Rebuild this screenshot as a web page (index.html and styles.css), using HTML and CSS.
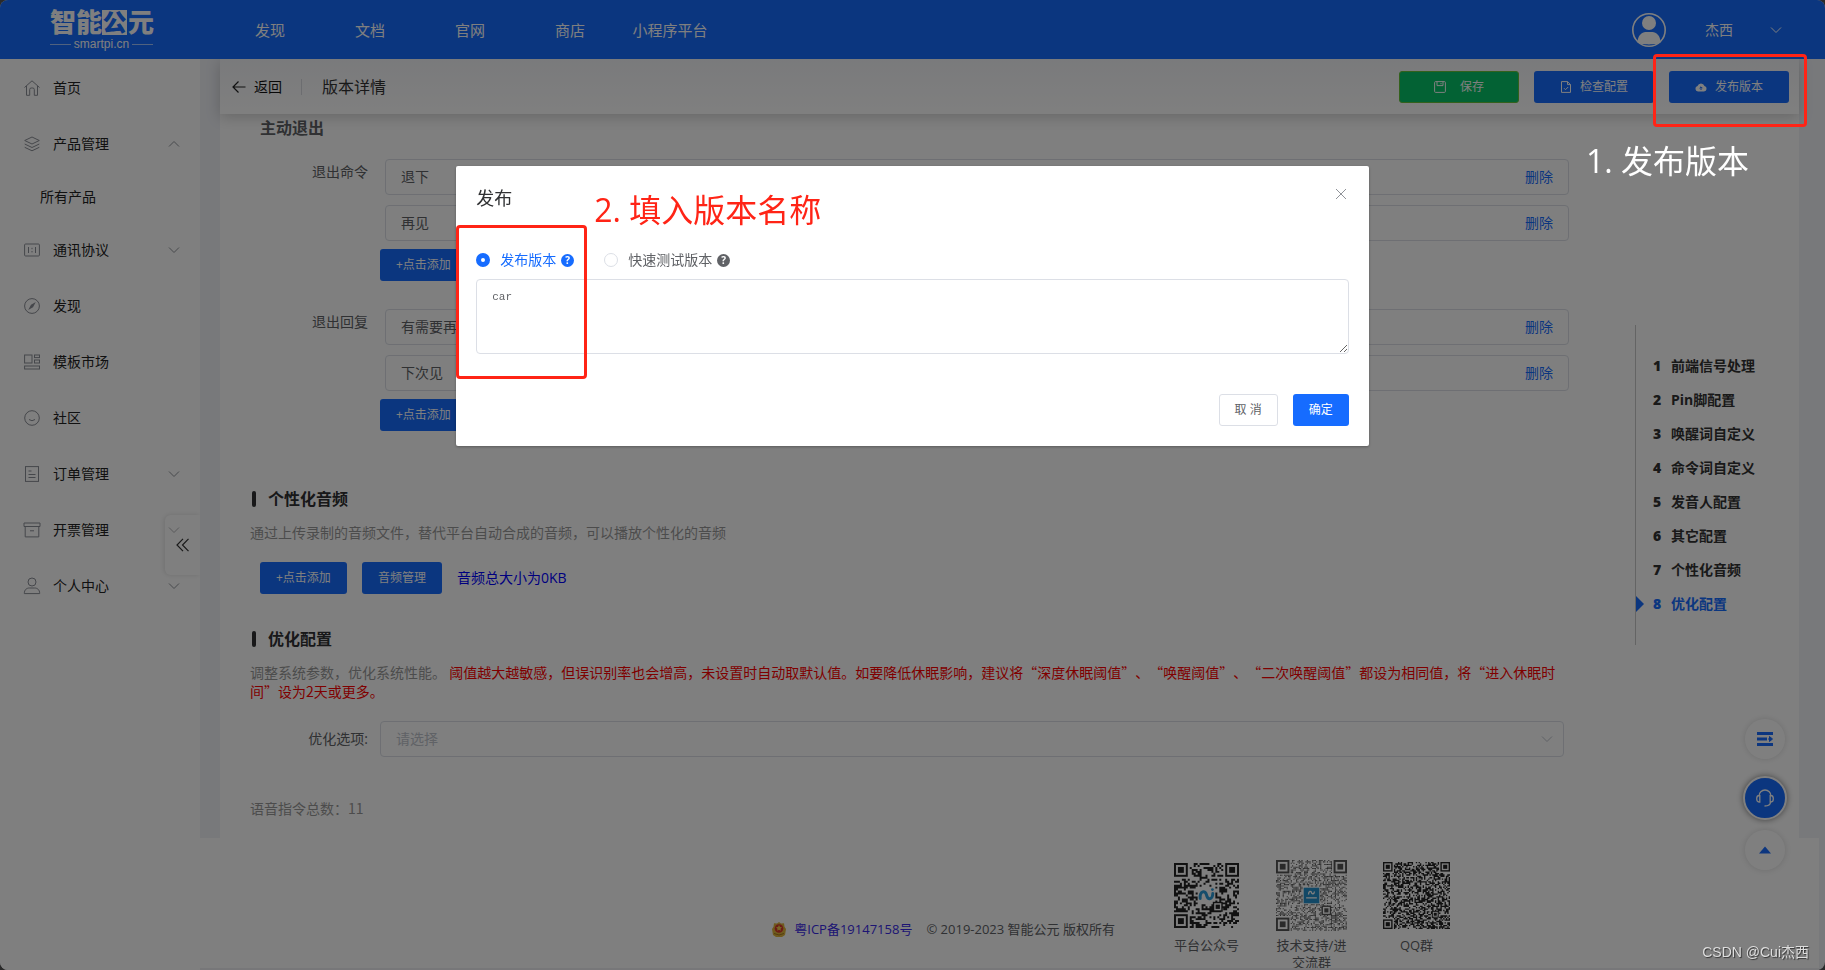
FILE: index.html
```html
<!DOCTYPE html>
<html lang="zh-CN">
<head>
<meta charset="utf-8">
<title>智能公元 - 版本详情</title>
<link rel="stylesheet" href="styles.css">
</head>
<body>
<div class="app">
  <header class="header">
    <a class="logo" href="#">
      <span class="logo-name"><span>智</span><span>能</span><span class="logo-box">公</span><span>元</span></span>
      <span class="logo-sub">smartpi.cn</span>
    </a>
    <nav class="topnav">
      <a href="#">发现</a><a href="#">文档</a><a href="#">官网</a><a href="#">商店</a><a href="#">小程序平台</a>
    </nav>
    <div class="user">
      <svg class="avatar" viewBox="0 0 36 36"><circle cx="18" cy="18" r="16.2" fill="none" stroke="#fff" stroke-width="1.6"/><circle cx="18" cy="11" r="7" fill="#fff"/><path d="M6.5 30.5c0-7 4.500-10.500 8-10.500h7c3.500 0 8 3.500 8 10.500-3 2.500-20 2.500-23 0z" fill="#fff"/></svg>
      <span>杰西</span>
      <svg class="chev" viewBox="0 0 12 12"><path d="M1 3.500l5 5 5-5"/></svg>
    </div>
  </header>

  <div class="body">
    <aside class="sidebar">
      <a class="item" href="#"><svg class="ico" viewBox="0 0 16 16"><path d="M.5 7.500L8 .8l7.500 6.700M2.500 6v9.300h3.200V9.500q0-1.500 1.500-1.500h1.600q1.500 0 1.500 1.500v5.800h3.200V6"/></svg><span>首页</span></a>
      <a class="item" href="#"><svg class="ico" viewBox="0 0 16 16"><path d="M8 1l7.300 3.500L8 8 .7 4.500zM.7 8L8 11.500 15.300 8M.7 11.300L8 14.800l7.300-3.500"/></svg><span>产品管理</span><svg class="chev" viewBox="0 0 12 12"><path d="M1 8.500l5-5 5 5"/></svg></a>
      <a class="item sub" href="#"><span>所有产品</span></a>
      <a class="item" href="#"><svg class="ico" viewBox="0 0 16 16"><rect x=".6" y="2" width="14.800" height="12" rx="1"/><path d="M4.500 5v6M11.500 5v6M8 5.800v1.400M8 9v1.400"/></svg><span>通讯协议</span><svg class="chev" viewBox="0 0 12 12"><path d="M1 3.500l5 5 5-5"/></svg></a>
      <a class="item" href="#"><svg class="ico" viewBox="0 0 16 16"><circle cx="8" cy="8" r="7.400"/><path d="M11.800 4L9 9.200 4.200 12 7 6.800z" fill="#8b8e96" stroke="none"/></svg><span>发现</span></a>
      <a class="item" href="#"><svg class="ico" viewBox="0 0 16 16"><rect x=".6" y="1" width="7.400" height="8"/><rect x="10.500" y="1" width="5" height="2.600"/><rect x="10.500" y="6" width="5" height="3"/><rect x=".6" y="12" width="14.900" height="3"/></svg><span>模板市场</span></a>
      <a class="item" href="#"><svg class="ico" viewBox="0 0 16 16"><circle cx="8" cy="8" r="7.300"/><path d="M5 9.500q3 2.500 6 0"/></svg><span>社区</span></a>
      <a class="item" href="#"><svg class="ico" viewBox="0 0 16 16"><rect x="1.500" y=".6" width="13" height="14.800"/><path d="M4.500 5h3M4.500 8.500h7M4.500 11.500h7"/></svg><span>订单管理</span><svg class="chev" viewBox="0 0 12 12"><path d="M1 3.500l5 5 5-5"/></svg></a>
      <a class="item" href="#"><svg class="ico" viewBox="0 0 16 16"><path d="M0 1h16v3.500H0zM1.200 4.500v10.400h13.600V4.500M6 8.800h4"/></svg><span>开票管理</span><svg class="chev" viewBox="0 0 12 12"><path d="M1 3.500l5 5 5-5"/></svg></a>
      <a class="item" href="#"><svg class="ico" viewBox="0 0 16 16"><circle cx="8" cy="4" r="4"/><path d="M.3 15.600c0-4 2.500-5.600 5-5.600h5.400c2.500 0 5 1.600 5 5.600z"/></svg><span>个人中心</span><svg class="chev" viewBox="0 0 12 12"><path d="M1 3.500l5 5 5-5"/></svg></a>
      <button class="collapse" aria-label="收起"><svg viewBox="0 0 14 14"><path d="M7 .8L1 7l6 6.200M12.500.8L6.500 7l6 6.200"/></svg></button>
    </aside>

    <div class="page">
      <main class="main">
        <div class="titlebar">
          <button class="back"><svg viewBox="0 0 14 14"><path d="M13.500 7H1M6.500 1.500L1 7l5.500 5.500"/></svg>返回</button>
          <i class="sep"></i>
          <h1>版本详情</h1>
          <div class="actions">
            <button class="btn wide save"><svg viewBox="0 0 12 12"><rect x=".6" y=".6" width="10.800" height="10.800" rx="1"/><path d="M3 .6v4h6v-4M7 2v1.200"/></svg>保存</button>
            <button class="btn wide"><svg viewBox="0 0 12 12"><path d="M1.500.6h6l3 3v7.800h-9zM7.500.6v3h3M4 7.200l1.500 1.500 2.700-2.700"/></svg>检查配置</button>
            <button class="btn wide"><svg viewBox="0 0 12 12"><path d="M3 10.500a2.800 2.800 0 0 1-.5-5.500 3.700 3.700 0 0 1 7 0 2.800 2.800 0 0 1-.5 5.500z" fill="#fff" stroke="none"/><path d="M6 9V6M4.600 7.200L6 5.800l1.400 1.400" stroke="#1a6cff"/></svg>发布版本</button>
          </div>
        </div>

        <div class="content">
          <div class="form">
            <h3 class="subhead">主动退出</h3>
            <div class="row">
              <span class="label">退出命令</span>
              <div class="fields">
                <div class="field"><input aria-label="退出命令一" value="退下"><button>删除</button></div>
                <div class="field"><input aria-label="退出命令二" value="再见"><button>删除</button></div>
                <button class="btn add">+点击添加</button>
              </div>
            </div>
            <div class="row second">
              <span class="label">退出回复</span>
              <div class="fields">
                <div class="field"><input aria-label="退出回复一" value="有需要再叫我"><button>删除</button></div>
                <div class="field"><input aria-label="退出回复二" value="下次见"><button>删除</button></div>
                <button class="btn add">+点击添加</button>
              </div>
            </div>

            <h2 class="section audio">个性化音频</h2>
            <p class="desc">通过上传录制的音频文件，替代平台自动合成的音频，可以播放个性化的音频</p>
            <div class="tools">
              <button class="btn add">+点击添加</button>
              <button class="btn">音频管理</button>
              <span class="total">音频总大小为0KB</span>
            </div>

            <h2 class="section tuning">优化配置</h2>
            <p class="desc">调整系统参数，优化系统性能。 <span class="warn">阈值越大越敏感，但误识别率也会增高，未设置时自动取默认值。如要降低休眠影响，建议将“深度休眠阈值”、“唤醒阈值”、“二次唤醒阈值”都设为相同值，将“进入休眠时间”设为2天或更多。</span></p>
            <div class="row option">
              <label class="label" for="opt">优化选项:</label>
              <div class="select">
                <select id="opt"><option>请选择</option></select>
                <svg class="chev" viewBox="0 0 12 12"><path d="M1 3.500l5 5 5-5"/></svg>
              </div>
            </div>
            <p class="desc count">语音指令总数：11</p>
          </div>

          <ol class="anchors">
            <li><b>1</b><a href="#">前端信号处理</a></li>
            <li><b>2</b><a href="#">Pin脚配置</a></li>
            <li><b>3</b><a href="#">唤醒词自定义</a></li>
            <li><b>4</b><a href="#">命令词自定义</a></li>
            <li><b>5</b><a href="#">发音人配置</a></li>
            <li><b>6</b><a href="#">其它配置</a></li>
            <li><b>7</b><a href="#">个性化音频</a></li>
            <li class="on"><b>8</b><a href="#">优化配置</a></li>
          </ol>
        </div>
      </main>

      <footer class="footer">
        <div class="legal">
          <svg viewBox="0 0 14 15"><path d="M7 0l2 1.500 3-.2.500 3.500L14 7l-1 6-3 2H4l-3-2-1-6 1.500-2.200.5-3.500 3 .2z" fill="#e0b53c"/><circle cx="7" cy="6.500" r="4.300" fill="#d8382c"/><path d="M7 3l1 2 2 .3-1.500 1.400.4 2L7 7.700l-1.900 1 .4-2L4 5.300 6 5z" fill="#f3cd4b"/><path d="M2 11.500q5 3 10 0" stroke="#a97b1c" fill="none"/></svg>
          <a href="#">粤ICP备19147158号</a>
          <span>© 2019-2023 智能公元 版权所有</span>
        </div>
        <figure class="code"><div><svg class="qr small" data-n="33" data-seed="7" data-kind="wave"></svg></div><figcaption>平台公众号</figcaption></figure>
        <figure class="code"><div><svg class="qr big" data-n="53" data-seed="23" data-kind="badge"></svg></div><figcaption>技术支持/进交流群</figcaption></figure>
        <figure class="code"><div><svg class="qr mid" data-n="49" data-seed="91" data-kind="plain"></svg></div><figcaption>QQ群</figcaption></figure>
      </footer>
    </div>
  </div>
</div>

<div class="floats">
  <button aria-label="目录"><svg viewBox="0 0 16 14"><path d="M0 1.500h16M0 7h10M0 12.500h16" stroke="#1a6cff" stroke-width="2.800" fill="none"/><path d="M11 7h3M12.500 4.500L15.500 7l-3 2.500z" fill="#1a6cff" stroke="#1a6cff"/></svg></button>
  <button class="service" aria-label="客服"><svg viewBox="0 0 18 18"><path d="M3 7a6 6 0 0 1 12 0M3.800 6.500v6.500H3Q.7 13 .7 9.800T3 6.500zM14.200 6.500v6.500h.8q2.300 0 2.300-3.200T15 6.500zM14.500 13q0 4-6 4" fill="none" stroke="#fff" stroke-width="1.300"/></svg></button>
  <button aria-label="回到顶部"><svg viewBox="0 0 16 14"><path d="M8 3.500l6 7H2z" fill="#1a6cff"/></svg></button>
</div>

<div class="mask">
  <section class="dialog" role="dialog" aria-labelledby="dlg">
    <div class="dialog-head"><h2 id="dlg">发布</h2><button class="close" aria-label="关闭"><svg viewBox="0 0 12 12"><path d="M1 1l10 10M11 1L1 11"/></svg></button></div>
    <div class="radios">
      <label class="checked"><input type="radio" name="kind" checked><span>发布版本</span><i class="help">?</i></label>
      <label><input type="radio" name="kind"><span>快速测试版本</span><i class="help">?</i></label>
    </div>
    <textarea aria-label="版本名称">car</textarea>
    <div class="dialog-foot"><button class="btn cancel">取 消</button><button class="btn">确定</button></div>
    <div class="frame frame-form"></div>
    <p class="note note-form">2. 填入版本名称</p>
  </section>
  <div class="frame frame-publish"></div>
  <p class="note note-publish">1. 发布版本</p>
  <p class="watermark">CSDN @Cui杰西</p>
</div>
<script src="qr.js"></script>
</body>
</html>
```
FILE: styles.css
```css
* { box-sizing: border-box; }
html { background: #555; }
body, h1, h2, h3, p, ol, figure { margin: 0; padding: 0; }
body { font: 14px/20px "Open Sans", "Noto Sans CJK SC", sans-serif; color: #333; overflow: hidden; }
a { color: inherit; text-decoration: none; }
button, input, select { font: inherit; color: inherit; }
button { border: 0; background: none; padding: 0; cursor: pointer; }
svg { display: block; flex: none; }

.app { min-height: 100vh; display: flex; flex-direction: column; background: #f0f2f7; border-radius: 8px; overflow: hidden; }
.header { height: 59px; background: #166cff; color: #fff; display: flex; align-items: center; }
.logo { width: 220px; padding-left: 50px; padding-top: 2px; }
.logo-name { display: flex; gap: 1px; height: 27px; }
.logo-name span { width: 25px; height: 25px; font-size: 26px; line-height: 24px; font-weight: 900; }
.logo-name .logo-box { background: #fff; color: #166cff; font-size: 24px; text-align: center; }
.logo-sub { display: flex; align-items: center; gap: 3px; width: 103px; font: 12px/14px "Liberation Sans", sans-serif; }
.logo-sub::before, .logo-sub::after { content: ""; flex: 1; height: 1px; background: rgba(255,255,255,.6); }
.topnav { display: flex; font-size: 15px; }
.topnav a { width: 100px; text-align: center; }
.user { margin-left: auto; padding-right: 43px; display: flex; align-items: center; }
.avatar { width: 36px; height: 36px; margin-right: 38px; }
.user .chev { margin-left: 37px; stroke: #fff; }
.chev { width: 12px; height: 12px; fill: none; stroke: #909399; }

.body { flex: 1; display: flex; }
.sidebar { width: 200px; flex: none; background: #fff; padding-top: 2px; position: relative; color: #222; }
.item { height: 56px; padding: 0 20px 2px 24px; display: flex; align-items: center; gap: 13px; }
.item.sub { height: 50px; padding-left: 40px; }
.item .chev { margin-left: auto; }
.ico { width: 16px; height: 16px; fill: none; stroke: #8b8e96; overflow: visible; }
.collapse { position: absolute; right: 0; top: 456px; width: 35px; height: 60px; border-radius: 6px 0 0 6px; background: rgba(255,255,255,.3); box-shadow: -1px 0 5px rgba(0,0,0,.12); display: flex; align-items: center; justify-content: center; clip-path: inset(-8px 0 -8px -8px); }
.collapse svg { width: 14px; height: 14px; fill: none; stroke: #333; stroke-width: 1.2; }

.page { flex: 1; min-width: 0; display: flex; flex-direction: column; }
.main { flex: 1; margin: 0 26px 0 20px; background: #fff; }
.titlebar { height: 55px; padding: 0 10px 0 12px; display: flex; align-items: center; background: linear-gradient(#f4f5f8, #fff); box-shadow: 0 3px 14px rgba(0,0,0,.2); clip-path: inset(0 -14px -20px -14px); }
.back { display: flex; align-items: center; gap: 8px; color: #111; }
.back svg { width: 14px; height: 14px; fill: none; stroke: #222; stroke-width: 1.200; }
.sep { width: 1px; height: 16px; background: #d8dae0; margin: 0 20px 0 19px; }
h1 { font-size: 16px; font-weight: 400; line-height: 24px; }
.actions { margin-left: auto; display: flex; align-items: center; gap: 15px; }
.btn { height: 32px; padding: 0 16px; background: #166cff; color: #fff; border-radius: 3px; font-size: 12px; line-height: 18px; display: flex; align-items: center; justify-content: center; white-space: nowrap; }
.btn.wide { width: 120px; gap: 8px; }
.btn svg { width: 12px; height: 12px; fill: none; stroke: #fff; }
.btn.save { gap: 14px; background: #07c568; border: 1px solid #67c23a; }

.content { display: flex; align-items: flex-start; padding: 4px 0 20px 30px; }
.form { flex: 1; min-width: 0; }
.subhead { font-size: 16px; line-height: 20px; color: #606266; padding-left: 10px; margin-bottom: 21px; }
.row { display: flex; }
.row.second { margin-top: 28px; }
.label { width: 130px; flex: none; padding-right: 12px; text-align: right; line-height: 26px; color: #606266; }
.fields { flex: 1; }
.field { height: 36px; margin: 0 0 10px 5px; padding: 0 15px; border: 1px solid #dcdfe6; border-radius: 4px; display: flex; align-items: center; color: #606266; }
.field input { flex: 1; min-width: 0; border: 0; padding: 0; background: none; outline: 0; }
.field button { color: #166cff; }
.fields .add { margin-top: -2px; }
.section { font-size: 16px; line-height: 24px; color: #303133; display: flex; align-items: center; gap: 12px; padding-left: 2px; }
.section::before { content: ""; width: 4px; height: 16px; border-radius: 2px; background: #303133; }
.audio { margin-top: 56px; }
.tuning { margin-top: 33px; }
.desc { margin-top: 12px; line-height: 19px; color: #999; font-family: "Noto Sans CJK SC", sans-serif; text-spacing-trim: space-all; }
.warn { color: #f00; }
.tools { display: flex; align-items: center; gap: 15px; padding-left: 10px; margin-top: 20px; }
.total { color: #00f; }
.option { margin: 20px 5px 0 0; align-items: center; }
.select { flex: 1; height: 36px; border: 1px solid #dcdfe6; border-radius: 4px; display: flex; align-items: center; padding: 0 10px 0 15px; }
.select select { flex: 1; border: 0; padding: 0; appearance: none; background: none; color: #c0c4cc; outline: 0; }
.select .chev { stroke: #c0c4cc; }
.count { margin-top: 42px; }

.anchors { list-style: none; margin: 207px 0 0 66px; width: 164px; flex: none; padding: 24px 0; border-left: 1px solid #c8c8c8; font-weight: 700; }
.anchors li { height: 34px; display: flex; align-items: center; gap: 10px; padding-left: 17px; }
.anchors b { width: 8px; }
.anchors .on { color: #166cff; padding-left: 0; }
.anchors .on::before { content: ""; border-left: 8px solid #166cff; border-top: 8px solid transparent; border-bottom: 8px solid transparent; margin-right: -1px; }

.footer { height: 132px; margin-right: 6px; padding: 22px 365px 0 0; background: #fefefe; display: flex; justify-content: flex-end; gap: 30px; font-size: 13px; line-height: 17px; color: #606266; border-bottom: 2px solid #eeeff3; overflow: hidden; }
.legal { display: flex; align-items: center; height: 18px; margin: 60px 24px 0 0; white-space: nowrap; }
.legal svg { width: 14px; height: 15px; margin-right: 8px; }
.legal a { color: #3a2be8; margin-right: 14px; }
.code { width: 75px; text-align: center; }
.code div { height: 71px; margin-bottom: 6px; display: flex; align-items: center; justify-content: center; }
.qr.small { width: 65px; height: 65px; }
.qr.big { width: 71px; height: 71px; }
.qr.mid { width: 67px; height: 67px; }

.floats { position: fixed; right: 40px; bottom: 100px; display: flex; flex-direction: column; align-items: center; width: 40px; }
.floats button { width: 40px; height: 40px; border-radius: 50%; background: #fff; box-shadow: 0 0 6px rgba(0,0,0,.14); display: flex; align-items: center; justify-content: center; }
.floats svg { width: 16px; height: 14px; }
.floats .service { width: 44px; height: 44px; margin: 17px 0 10px; border: 2px solid #fff; background: #166cff; box-shadow: 0 0 6px rgba(0,0,0,.5); }
.floats .service svg { width: 18px; height: 18px; }

.mask { position: fixed; inset: 0; background: rgba(0,0,0,.5); }
.dialog { position: relative; width: 50%; margin: 166px auto 0; padding: 20px; background: #fff; border-radius: 2px; box-shadow: 0 1px 3px rgba(0,0,0,.3); color: #606266; }
.dialog-head { display: flex; justify-content: space-between; }
.dialog h2 { font-size: 18px; line-height: 24px; font-weight: 400; color: #303133; }
.close { width: 16px; height: 16px; display: flex; align-items: center; justify-content: center; }
.close svg { width: 12px; height: 12px; stroke: #909399; }
.radios { display: flex; gap: 30px; margin: 40px 0 9px; }
.radios label { display: flex; align-items: center; }
.radios input { appearance: none; width: 14px; height: 14px; margin: 0 10px 0 0; border: 1px solid #dcdfe6; border-radius: 50%; background: #fff; }
.radios input:checked { border: 5px solid #166cff; }
.radios .checked { color: #166cff; }
.help { width: 13px; height: 13px; margin-left: 5px; border-radius: 50%; background: #606266; color: #fff; font: 700 10px/13px "Open Sans", sans-serif; text-align: center; }
.checked .help { background: #166cff; }
.dialog textarea { display: block; width: 100%; height: 75px; padding: 9px 15px; border: 1px solid #dcdfe6; border-radius: 4px; font: 11px/17px "Liberation Mono", monospace; color: #606266; outline: 0; }
.dialog-foot { display: flex; justify-content: flex-end; gap: 15px; margin-top: 40px; }
.cancel { padding: 0 15px; background: #fff; color: #606266; border: 1px solid #dcdfe6; }

.frame { position: absolute; border: 3px solid #ff2416; border-radius: 4px; }
.frame-form { left: 0; top: 59px; width: 131px; height: 154px; }
.frame-publish { right: 18px; top: 54px; width: 154px; height: 73px; }
.note { position: absolute; font-size: 32px; line-height: 40px; white-space: nowrap; }
.note-form { left: 138px; top: 24px; color: #ff2416; }
.note-publish { right: 76px; top: 141px; color: #fff; }
.watermark { position: absolute; right: 16px; bottom: 8px; font: 14px/20px "Liberation Sans", "Noto Sans CJK SC", sans-serif; color: #ddd; text-shadow: 1px 1px 1px #333; }
```
FILE: qr.js
```js
// Draws the footer QR symbols as SVG modules from a seeded sequence.
document.querySelectorAll('.qr').forEach(function (svg) {
  var n = Number(svg.dataset.n), s = Number(svg.dataset.seed), kind = svg.dataset.kind;
  var f = kind === 'badge' ? 10 : 7;
  var ink = kind === 'badge' ? '#555' : '#222';
  var size = kind === 'badge' ? 0.8 : 1;
  var d = '';
  function rnd() { s = (s * 16807) % 2147483647; return s / 2147483647; }
  for (var i = 0; i < 20; i++) rnd();
  for (var y = 0; y < n; y++) {
    for (var x = 0; x < n; x++) {
      var on = rnd() < 0.5;
      var corner = (x <= f && y <= f) || (x >= n - f - 1 && y <= f) || (x <= f && y >= n - f - 1);
      var mid = kind !== 'plain' && Math.abs(x - n / 2 + 0.5) < n * 0.13 && Math.abs(y - n / 2 + 0.5) < n * 0.13;
      if (on && !corner && !mid) d += 'M' + x + ' ' + y + 'h' + size + 'v' + size + 'h-' + size + 'z';
    }
  }
  var out = '<path fill="' + ink + '" d="' + d + '"/>';
  function finder(x, y, w) {
    var t = w / 7;
    out += '<rect x="' + (x + t / 2) + '" y="' + (y + t / 2) + '" width="' + (w - t) + '" height="' + (w - t) + '" fill="#fff" stroke="' + ink + '" stroke-width="' + t + '"/>' +
      '<rect x="' + (x + 2 * t) + '" y="' + (y + 2 * t) + '" width="' + 3 * t + '" height="' + 3 * t + '" fill="' + ink + '"/>';
  }
  finder(0, 0, f); finder(n - f, 0, f); finder(0, n - f, f);
  finder(n - f * 1.9, n - f * 1.9, f * 0.72);
  var c = n / 2, r = n * 0.11;
  if (kind === 'wave') {
    out += '<g transform="translate(' + c + ' ' + c + ')"><path d="M-3.200 1.500C-3.500-2.500-.5-2.800 0-.3S3 2.500 3.200-1" fill="none" stroke="#2a9bd8" stroke-width="1.500" stroke-linecap="round"/><circle cx="3" cy="-3" r=".7" fill="#2a9bd8"/></g>';
  }
  if (kind === 'badge') {
    out += '<rect x="' + (c - r) + '" y="' + (c - r) + '" width="' + 2 * r + '" height="' + 2 * r + '" fill="#2590cc"/>' +
      '<g transform="translate(' + c + ' ' + c + ')" fill="none" stroke="#fff"><path d="M-2.200-.8C-2.200-3.500-.3-3.500 0-2.200S2-.8 2.200-3M-4 1.800h8"/></g>';
  }
  svg.setAttribute('viewBox', '0 0 ' + n + ' ' + n);
  svg.innerHTML = out;
});
```
